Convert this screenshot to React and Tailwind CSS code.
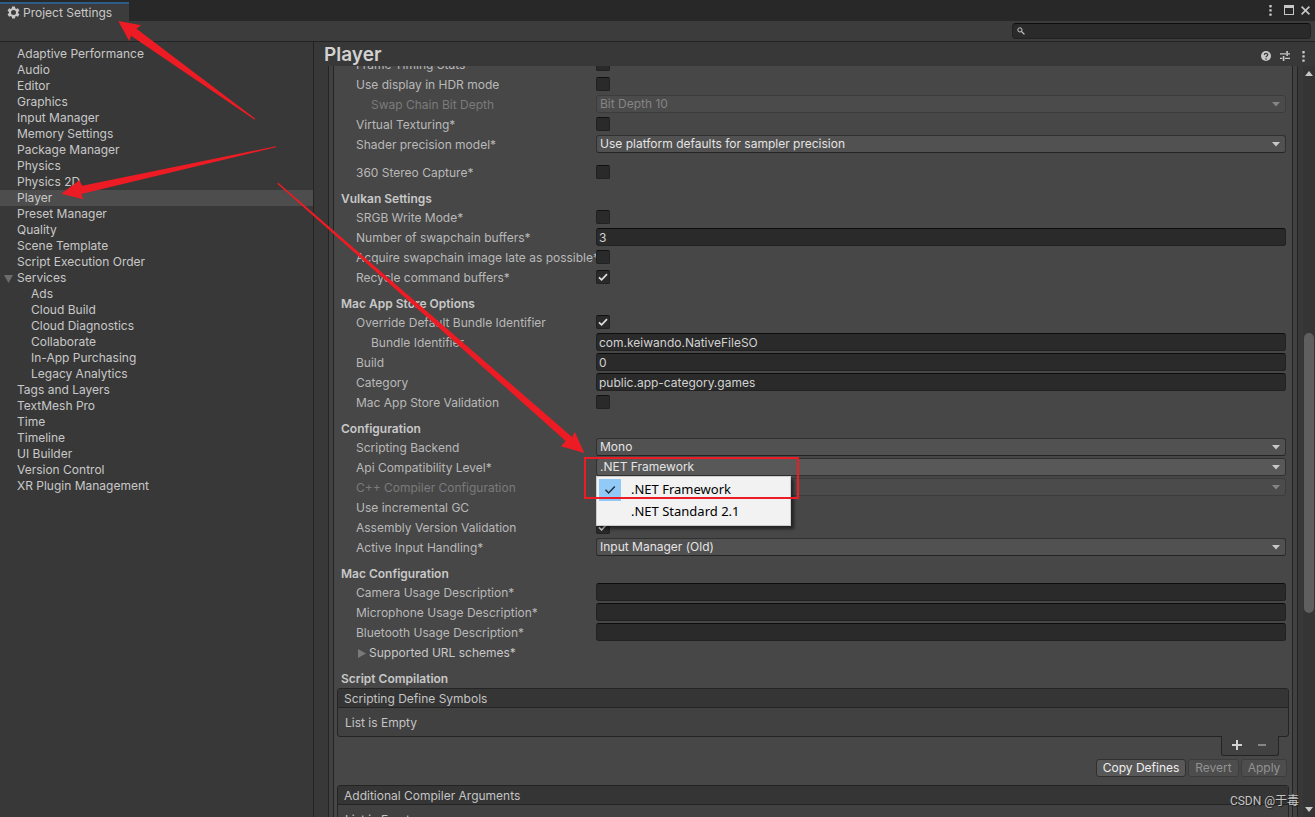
import { useId } from "react";

const navItems = [
  { name: "Adaptive Performance" },
  { name: "Audio" },
  { name: "Editor" },
  { name: "Graphics" },
  { name: "Input Manager" },
  { name: "Memory Settings" },
  { name: "Package Manager" },
  { name: "Physics" },
  { name: "Physics 2D" },
  { name: "Player", active: true },
  { name: "Preset Manager" },
  { name: "Quality" },
  { name: "Scene Template" },
  { name: "Script Execution Order" },
  { name: "Services", open: true },
  { name: "Ads", nested: true },
  { name: "Cloud Build", nested: true },
  { name: "Cloud Diagnostics", nested: true },
  { name: "Collaborate", nested: true },
  { name: "In-App Purchasing", nested: true },
  { name: "Legacy Analytics", nested: true },
  { name: "Tags and Layers" },
  { name: "TextMesh Pro" },
  { name: "Time" },
  { name: "Timeline" },
  { name: "UI Builder" },
  { name: "Version Control" },
  { name: "XR Plugin Management" },
];

function KebabIcon() {
  return (
    <svg viewBox="0 0 3 11" className="h-[11px] w-[3px]" fill="#c8c8c8" aria-hidden="true">
      <rect width="2.4" height="2.4" x="0.3" y="0" rx="0.6" />
      <rect width="2.4" height="2.4" x="0.3" y="4.2" rx="0.6" />
      <rect width="2.4" height="2.4" x="0.3" y="8.4" rx="0.6" />
    </svg>
  );
}

function GearIcon() {
  return (
    <svg viewBox="0 0 24 24" className="size-[15px] shrink-0" fill="#c8c8c8" aria-hidden="true">
      <path d="M19.14 12.94c.04-.3.06-.61.06-.94 0-.32-.02-.64-.07-.94l2.03-1.58a.49.49 0 0 0 .12-.61l-1.92-3.32a.488.488 0 0 0-.59-.22l-2.39.96c-.5-.38-1.03-.7-1.62-.94l-.36-2.54a.484.484 0 0 0-.48-.41h-3.84c-.24 0-.43.17-.47.41l-.36 2.54c-.59.24-1.13.57-1.62.94l-2.39-.96c-.22-.08-.47 0-.59.22L2.74 8.87c-.12.21-.08.47.12.61l2.03 1.58c-.05.3-.09.63-.09.94s.02.64.07.94l-2.03 1.58a.49.49 0 0 0-.12.61l1.92 3.32c.12.22.37.29.59.22l2.39-.96c.5.38 1.03.7 1.62.94l.36 2.54c.05.24.24.41.48.41h3.84c.24 0 .44-.17.47-.41l.36-2.54c.59-.24 1.13-.56 1.62-.94l2.39.96c.22.08.47 0 .59-.22l1.92-3.32c.12-.22.07-.47-.12-.61l-2.01-1.58zM12 16a4 4 0 1 1 0-8 4 4 0 0 1 0 8z" />
    </svg>
  );
}

function Row({ label, id, nested, disabled, children }) {
  return (
    <div className="grid h-5 grid-cols-[240px_minmax(0,1fr)] items-start pl-[22px] pr-[6px]">
      <label
        htmlFor={id}
        className={`whitespace-nowrap pt-px leading-[18px] ${nested ? "pl-[15px]" : ""} ${
          disabled ? "text-[#7b7b7b]" : "text-[#b9b9b9]"
        }`}
      >
        {label}
      </label>
      <div className="relative h-[18px]">{children}</div>
    </div>
  );
}

function CheckRow({ label, checked }) {
  const id = useId();
  return (
    <Row label={label} id={id}>
      <div className="relative my-[2px] size-[14px]">
        <input
          id={id}
          type="checkbox"
          defaultChecked={checked}
          className="peer block size-[14px] appearance-none rounded-[2px] border border-[#212121] border-t-[#111111] bg-[#2a2a2a]"
        />
        <svg
          viewBox="0 0 14 14"
          className="pointer-events-none absolute inset-0 hidden size-[14px] peer-checked:block"
          fill="none"
          stroke="#e0e0e0"
          strokeWidth="1.7"
          aria-hidden="true"
        >
          <path d="M3 7.3 5.6 9.8 11 4.2" />
        </svg>
      </div>
    </Row>
  );
}

function SelectRow({ label, value, options, nested, disabled, highlighted, children }) {
  const id = useId();
  return (
    <Row label={label} id={id} nested={nested} disabled={disabled}>
      <select
        id={id}
        disabled={disabled}
        defaultValue={value}
        className={`block h-[18px] w-full appearance-none rounded-[3px] border pb-px pl-[3px] leading-[15px] opacity-100 ${
          disabled
            ? "border-[#3c3c3c] bg-[#4b4b4b] text-[#858585]"
            : highlighted
              ? "border-[#303030] bg-[#585858] text-[#e4e4e4]"
              : "border-[#303030] border-b-[#242424] bg-[#515151] text-[#e4e4e4]"
        }`}
      >
        {(options || [value]).map((o) => (
          <option key={o}>{o}</option>
        ))}
      </select>
      <svg
        viewBox="0 0 8 5"
        className="pointer-events-none absolute right-[6px] top-[7px] h-[5px] w-2"
        fill={disabled ? "#858585" : "#c8c8c8"}
        aria-hidden="true"
      >
        <path d="M0 0h8L4 4.6z" />
      </svg>
      {children}
    </Row>
  );
}

function TextRow({ label, value = "", nested }) {
  const id = useId();
  return (
    <Row label={label} id={id} nested={nested}>
      <input
        id={id}
        type="text"
        defaultValue={value}
        className="block h-[18px] w-full rounded-[3px] border border-[#212121] border-t-[#0d0d0d] bg-[#2a2a2a] px-[2px] leading-4 text-[#d2d2d2]"
      />
    </Row>
  );
}

function Section({ children }) {
  return (
    <h2 className="mt-[7px] h-[18px] pl-[7px] font-semibold leading-[18px] text-[#c8c8c8]">{children}</h2>
  );
}

function ListBox({ title }) {
  return (
    <div className="mx-[3px] rounded-[3px] border border-[#242424] bg-[#414141] text-[#c4c4c4]">
      <h3 className="h-[19px] border-b border-[#242424] bg-[#353535] pl-[6px] pt-px leading-[18px]">{title}</h3>
      <p className="h-7 pl-[7px] pt-px leading-7">List is Empty</p>
    </div>
  );
}

function ApiMenu() {
  return (
    <ul
      role="listbox"
      aria-label="Api Compatibility Level"
      className="absolute left-0 top-[18px] z-10 w-[195px] border border-[#cccccc] bg-[#f2f2f2] p-[2px] font-['Noto_Sans',sans-serif] text-[13px] text-black shadow-[3px_3px_3px_rgba(0,0,0,0.5)]"
    >
      <li role="option" aria-selected="true" className="flex h-[22px] items-center">
        <span className="flex size-[22px] items-center justify-center bg-[#91c9f7]">
          <svg viewBox="0 0 12 10" className="h-[10px] w-3" fill="none" stroke="#1f2a33" strokeWidth="1.4" aria-hidden="true">
            <path d="M1.5 4.8 4.6 8 10.8 1.6" />
          </svg>
        </span>
        <span className="pl-[10px]">.NET Framework</span>
      </li>
      <li role="option" aria-selected="false" className="flex h-[22px] items-center pl-8">
        .NET Standard 2.1
      </li>
    </ul>
  );
}

function Annotations() {
  return (
    <svg
      className="pointer-events-none absolute left-0 top-0 z-20 h-[520px] w-[820px]"
      viewBox="0 0 820 520"
      fill="#ed1c24"
      aria-hidden="true"
    >
      <path d="M118.3 21 141.3 25.3 136.5 28.7 255.3 118.7 254.7 119.7 131 35.7 129.3 41.3z" />
      <path d="M61.3 193.7 79.3 180.3 82.3 185.7 276 146.3 276 147.3 81.3 194 83.3 199.3z" />
      <path d="M584.3 453 574.7 431.7 572.3 437.3 278.3 182.7 277.3 183.7 565.7 441 561 446.3z" />
      <rect x="585" y="458" width="213" height="40" fill="none" stroke="#ed1c24" strokeWidth="2" />
    </svg>
  );
}

export default function App() {
  return (
    <div className="relative flex h-screen flex-col overflow-hidden bg-[#383838] font-['Inter',sans-serif] text-[12px] text-[#c8c8c8]">
      <header className="flex h-[21px] shrink-0 items-end justify-between bg-[#282828]">
        <div className="z-[1] flex h-[19px] w-[129px] items-center gap-[2px] border-t-2 border-[#2c5d87] bg-[#3c3c3c] pl-[6px]">
          <GearIcon />
          <span className="whitespace-nowrap pt-px">Project Settings</span>
        </div>
        <div className="flex h-[21px] items-center pb-px pr-[5px]">
          <button aria-label="Window menu" className="mr-3">
            <KebabIcon />
          </button>
          <button aria-label="Maximize" className="mr-[7px]">
            <svg viewBox="0 0 10 10" className="size-[10px]" aria-hidden="true">
              <path d="M0 0h10v10H0zM1 3v6h8V3z" fill="#c8c8c8" fillRule="evenodd" />
            </svg>
          </button>
          <button aria-label="Close">
            <svg viewBox="0 0 9 9" className="size-[9px]" stroke="#c8c8c8" strokeWidth="1.6" aria-hidden="true">
              <path d="M.6.6 8.4 8.4M8.4.6.6 8.4" />
            </svg>
          </button>
        </div>
      </header>

      <div className="flex h-[21px] shrink-0 items-center justify-end border-b border-[#232323] bg-[#3c3c3c] pr-1">
        <div className="flex h-4 w-[299px] items-center rounded-[4px] border border-[#212121] border-t-[#0d0d0d] bg-[#2a2a2a] pl-1">
          <svg viewBox="0 0 8 8" className="size-2 shrink-0" fill="none" stroke="#c8c8c8" aria-hidden="true">
            <circle cx="2.9" cy="2.9" r="2.1" strokeWidth="1" />
            <path d="M4.4 4.4 7.4 7.4" strokeWidth="1.3" />
          </svg>
          <input type="text" aria-label="Search settings" className="h-[14px] w-full bg-transparent pl-1 outline-none" />
        </div>
      </div>

      <div className="flex min-h-0 flex-1">
        <nav aria-label="Settings" className="w-[314px] shrink-0 border-r border-[#232323] pt-1">
          <ul>
            {navItems.map((item) => (
              <li key={item.name} className={item.active ? "bg-[#4d4d4d]" : ""}>
                <a
                  href={`#${item.name}`}
                  aria-current={item.active ? "page" : undefined}
                  className={`relative block h-4 leading-4 ${item.nested ? "pl-[31px]" : "pl-[17px]"}`}
                >
                  {item.open && (
                    <svg viewBox="0 0 9 8" className="absolute left-1 top-[5px] h-2 w-[9px]" fill="#6c6c6c" aria-hidden="true">
                      <path d="M0 0h9L4.5 8z" />
                    </svg>
                  )}
                  {item.name}
                </a>
              </li>
            ))}
          </ul>
        </nav>

        <main className="flex min-w-0 flex-1 flex-col">
          <div className="flex h-6 shrink-0 items-center justify-between px-[10px]">
            <h1 className="pt-[2px] text-[19px] font-semibold leading-6 text-[#d2d2d2]">Player</h1>
            <div className="flex items-center pt-1">
              <button aria-label="Help" className="mr-[9px]">
                <svg viewBox="0 0 10 10" className="size-[10px]" aria-hidden="true">
                  <circle cx="5" cy="5" r="5" fill="#c8c8c8" />
                  <path d="M3.3 4c0-2.3 3.5-2.2 3.5-.2C6.8 5 5 4.9 5 6.3" fill="none" stroke="#383838" strokeWidth="1.2" />
                  <circle cx="5" cy="8" r=".8" fill="#383838" />
                </svg>
              </button>
              <button aria-label="Presets" className="mr-[12px]">
                <svg viewBox="0 0 10 10" className="size-[10px]" fill="#c8c8c8" aria-hidden="true">
                  <path d="M0 2.3h6v1.3H0zM6.3 0h1.6v5H6.3zM8 2.3h2v1.3H8zM0 6.8h2.3v1.3H0zM2.8 5h1.6v5H2.8zM5 6.8h5v1.3H5z" />
                </svg>
              </button>
              <button aria-label="More options">
                <KebabIcon />
              </button>
            </div>
          </div>

          <div className="flex min-h-0 flex-1">
            <div className="ml-[14px] mr-[5px] flex min-w-0 flex-1 border-x border-[#242424] bg-[#414141] px-1">
              <div className="min-w-0 flex-1 overflow-hidden border-x border-[#242424] bg-[#474747]">
                <form className="-mt-[11px]">
                  <CheckRow label="Frame Timing Stats" />
                  <CheckRow label="Use display in HDR mode" />
                  <SelectRow label="Swap Chain Bit Depth" value="Bit Depth 10" nested disabled />
                  <CheckRow label="Virtual Texturing*" />
                  <SelectRow label="Shader precision model*" value="Use platform defaults for sampler precision" />
                  <div className="pt-2">
                    <CheckRow label="360 Stereo Capture*" />
                  </div>

                  <Section>Vulkan Settings</Section>
                  <CheckRow label="SRGB Write Mode*" />
                  <TextRow label="Number of swapchain buffers*" value="3" />
                  <CheckRow label="Acquire swapchain image late as possible*" />
                  <CheckRow label="Recycle command buffers*" checked />

                  <Section>Mac App Store Options</Section>
                  <CheckRow label="Override Default Bundle Identifier" checked />
                  <TextRow label="Bundle Identifier" value="com.keiwando.NativeFileSO" nested />
                  <TextRow label="Build" value="0" />
                  <TextRow label="Category" value="public.app-category.games" />
                  <CheckRow label="Mac App Store Validation" />

                  <Section>Configuration</Section>
                  <SelectRow label="Scripting Backend" value="Mono" options={["Mono", "IL2CPP"]} />
                  <SelectRow
                    label="Api Compatibility Level*"
                    value=".NET Framework"
                    options={[".NET Framework", ".NET Standard 2.1"]}
                    highlighted
                  >
                    <ApiMenu />
                  </SelectRow>
                  <SelectRow label="C++ Compiler Configuration" value="Release" disabled />
                  <CheckRow label="Use incremental GC" checked />
                  <CheckRow label="Assembly Version Validation" checked />
                  <SelectRow label="Active Input Handling*" value="Input Manager (Old)" />

                  <Section>Mac Configuration</Section>
                  <TextRow label="Camera Usage Description*" />
                  <TextRow label="Microphone Usage Description*" />
                  <TextRow label="Bluetooth Usage Description*" />
                  <button type="button" aria-expanded="false" className="flex h-5 items-center gap-[3px] pl-6 text-[#c8c8c8]">
                    <svg viewBox="0 0 8 9" className="h-[9px] w-2" fill="#7a7a7a" aria-hidden="true">
                      <path d="M0 0v9l8-4.5z" />
                    </svg>
                    Supported URL schemes*
                  </button>

                  <Section>Script Compilation</Section>
                  <ListBox title="Scripting Define Symbols" />
                  <div className="flex justify-end pr-[13px]">
                    <div className="-mt-px flex h-5 w-[58px] items-center justify-around rounded-b-[3px] border border-t-0 border-[#242424] bg-[#414141] pb-px pl-[2px] pr-1">
                      <button type="button" aria-label="Add symbol">
                        <svg viewBox="0 0 10 10" className="size-[10px]" fill="#d2d2d2" aria-hidden="true">
                          <path d="M4 0h2v4h4v2H6v4H4V6H0V4h4z" />
                        </svg>
                      </button>
                      <button type="button" aria-label="Remove symbol" disabled>
                        <svg viewBox="0 0 8 10" className="h-[10px] w-2" fill="#858585" aria-hidden="true">
                          <path d="M0 4h8v2H0z" />
                        </svg>
                      </button>
                    </div>
                  </div>
                  <div className="mb-2 mt-[3px] flex justify-end gap-[2px] pr-[5px] leading-4">
                    <button type="button" className="h-[18px] w-[90px] rounded-[3px] border border-[#303030] bg-[#585858] text-[#eeeeee]">
                      Copy Defines
                    </button>
                    <button type="button" disabled className="h-[18px] w-[51px] rounded-[3px] border border-[#3c3c3c] bg-[#4d4d4d] text-[#929292]">
                      Revert
                    </button>
                    <button type="button" disabled className="h-[18px] w-[46px] rounded-[3px] border border-[#3c3c3c] bg-[#4d4d4d] text-[#929292]">
                      Apply
                    </button>
                  </div>
                  <ListBox title="Additional Compiler Arguments" />
                </form>
              </div>
            </div>

            <div className="flex w-3 shrink-0 flex-col items-center bg-[#353535] pb-[5px] pt-[5px]">
              <svg viewBox="0 0 8 5" className="h-[5px] w-2 shrink-0" fill="#c8c8c8" aria-hidden="true">
                <path d="M0 5h8L4 0z" />
              </svg>
              <div className="min-h-0 w-full flex-1 px-px pt-[257px]">
                <div className="h-[280px] rounded-full bg-[#5f5f5f]" />
              </div>
              <svg viewBox="0 0 8 5" className="h-[5px] w-2 shrink-0" fill="#c8c8c8" aria-hidden="true">
                <path d="M0 0h8L4 5z" />
              </svg>
            </div>
          </div>
        </main>
      </div>

      <Annotations />
      <p className="absolute bottom-2 right-4 z-20 font-['Roboto','Noto_Sans_CJK_SC',sans-serif] text-[12px] leading-4 text-[#c4c4c4] [text-shadow:1px_1px_1px_#222]">
        CSDN @于毒
      </p>
    </div>
  );
}
